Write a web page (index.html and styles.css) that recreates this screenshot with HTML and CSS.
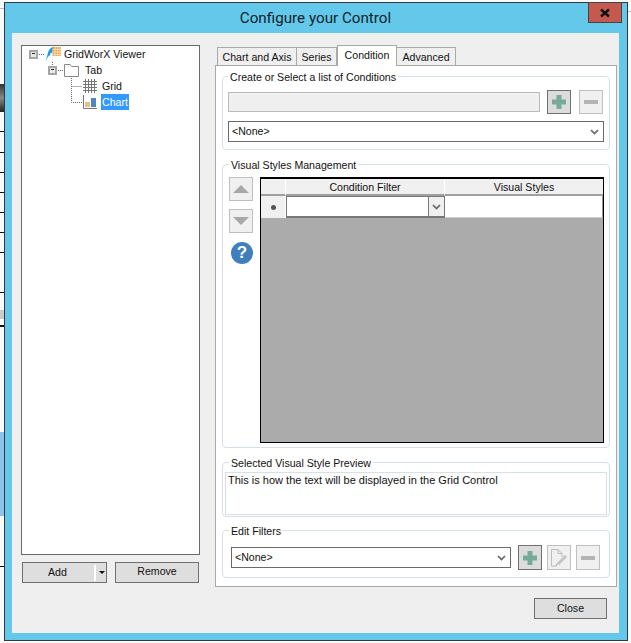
FILE: index.html
```html
<!DOCTYPE html>
<html lang="en">
<head>
<meta charset="utf-8">
<title>Configure your Control</title>
<link rel="stylesheet" href="styles.css">
</head>
<body>
<div class="desktop">
  <i class="bg b1"></i><i class="bg b2"></i><i class="bg b3"></i><i class="bg b4"></i>
  <i class="bg l l1"></i><i class="bg l l2"></i><i class="bg l l3"></i><i class="bg l l4"></i><i class="bg l l5"></i><i class="bg l l6"></i><i class="bg l l7"></i><i class="bg l l8"></i><i class="bg l l9"></i><i class="bg l l10"></i>
  <i class="bg r1"></i>
</div>
<div class="window">
  <div class="titlebar">
    <div class="title">Configure your Control</div>
    <div class="close-x">
      <svg width="12" height="10" viewBox="0 0 12 10"><path d="M2 1.5 L10 8.5 M10 1.5 L2 8.5" stroke="#111" stroke-width="2.4" fill="none"/></svg>
    </div>
  </div>
  <div class="content">
    <div class="main">
      <div class="leftcol">
        <div class="tree">
          <svg class="tree-lines" width="100" height="70" viewBox="0 0 100 70">
            <path d="M17 8.5H23M30.5 16V19M36 24.5H41M49.5 32V56.5H60M49.5 40.5H60" stroke="#666" stroke-dasharray="1 1" fill="none"/>
          </svg>
          <div class="node n0">
            <span class="exp"></span>
            <svg class="ico" width="16" height="16" viewBox="0 0 16 16"><path d="M.5 15.5 L3.5 5 Q5 1.5 9 .5 L7 7 L5 7.5 L5.5 9 L3 10.5 Z" fill="#1e9be8"/><rect x="7.5" y="1" width="8.5" height="9" fill="#e8a24a"/><path d="M10 1V10M12.5 1V10M15 1V10M7.5 3.5H16M7.5 6H16M7.5 8.5H16" stroke="#fbe3c4" stroke-width=".8"/></svg>
            <span class="lbl">GridWorX Viewer</span>
          </div>
          <div class="node n1">
            <span class="exp"></span>
            <svg class="ico" width="15" height="14" viewBox="0 0 15 14"><path d="M.5 13.5V1.5H6L7.5 3.5H14.5V13.5Z" fill="#fff" stroke="#888"/></svg>
            <span class="lbl">Tab</span>
          </div>
          <div class="node n2">
            <svg class="ico" width="14" height="14" viewBox="0 0 14 14"><path d="M0 2.5H14M0 5.5H14M0 8.5H14M0 11.5H14M2.5 0V14M5.5 0V14M8.5 0V14M11.5 0V14" stroke="#777" fill="none"/></svg>
            <span class="lbl">Grid</span>
          </div>
          <div class="node n2">
            <svg class="ico" width="14" height="14" viewBox="0 0 14 14"><path d="M.5 0V13.5H14" stroke="#777" fill="none"/><rect x="2" y="7" width="5" height="5" fill="#e8bf86"/><rect x="8" y="3" width="5" height="9" fill="#4f86bd"/></svg>
            <span class="lbl sel">Chart</span>
          </div>
        </div>
        <div class="tree-btns">
          <div class="btn add"><span class="add-lbl">Add</span><span class="add-sep"></span><span class="add-arrow"></span></div>
          <div class="btn remove">Remove</div>
        </div>
      </div>
      <div class="rightcol">
        <div class="tabs">
          <div class="tab t1">Chart and Axis</div>
          <div class="tab t2">Series</div>
          <div class="tab active t3">Condition</div>
          <div class="tab t4">Advanced</div>
        </div>
        <div class="panel">
          <fieldset class="group g1">
            <legend>Create or Select a list of Conditions</legend>
            <div class="row r-name">
              <div class="input-disabled"></div>
              <div class="icon-btn on"><svg width="16" height="16" viewBox="0 0 16 16"><path d="M8 1V15M1 8H15" stroke="#76ab9b" stroke-width="5"/></svg></div>
              <div class="icon-btn off"><svg width="16" height="16" viewBox="0 0 16 16"><path d="M1 8H15" stroke="#b4b4b4" stroke-width="4"/></svg></div>
            </div>
            <div class="combo full"><span>&lt;None&gt;</span><svg class="chev" width="9" height="6" viewBox="0 0 9 6"><path d="M1 1L4.5 4.5L8 1" stroke="#666" stroke-width="1.7" fill="none"/></svg></div>
          </fieldset>
          <fieldset class="group g2">
            <legend>Visual Styles Management</legend>
            <div class="vs">
              <div class="vs-side">
                <div class="icon-btn off tall"><svg width="16" height="10" viewBox="0 0 16 10"><path d="M8 1L16 9H0Z" fill="#a8a8a8"/></svg></div>
                <div class="icon-btn off tall"><svg width="16" height="10" viewBox="0 0 16 10"><path d="M0 1H16L8 9Z" fill="#a8a8a8"/></svg></div>
                <div class="help">?</div>
              </div>
              <div class="dgrid">
                <div class="dg-head">
                  <div class="dh corner"></div>
                  <div class="dh c1">Condition Filter</div>
                  <div class="dh c2">Visual Styles</div>
                </div>
                <div class="dg-row">
                  <div class="rowhead"><i class="star"></i></div>
                  <div class="dg-combo"><span class="dg-drop"><svg width="9" height="6" viewBox="0 0 9 6"><path d="M1 1L4.5 4.5L8 1" stroke="#666" stroke-width="1.7" fill="none"/></svg></span></div>
                  <div class="dg-cell"></div>
                </div>
              </div>
            </div>
          </fieldset>
          <fieldset class="group g3">
            <legend>Selected Visual Style Preview</legend>
            <div class="preview">This is how the text will be displayed in the Grid Control</div>
          </fieldset>
          <fieldset class="group g4">
            <legend>Edit Filters</legend>
            <div class="row r-edit">
              <div class="combo wide"><span>&lt;None&gt;</span><svg class="chev" width="9" height="6" viewBox="0 0 9 6"><path d="M1 1L4.5 4.5L8 1" stroke="#666" stroke-width="1.7" fill="none"/></svg></div>
              <div class="icon-btn on"><svg width="16" height="16" viewBox="0 0 16 16"><path d="M8 1V15M1 8H15" stroke="#76ab9b" stroke-width="5"/></svg></div>
              <div class="icon-btn off"><svg width="18" height="19" viewBox="0 0 18 19"><path d="M1.5 18V1.5H8L12 5.5V9M8 1.5V5.5H12M1.5 18H6" stroke="#bdbdbd" fill="none"/><path d="M8 16L16 8" stroke="#c4c4c4" stroke-width="3"/><path d="M6 18L7.5 15.5" stroke="#999"/></svg></div>
              <div class="icon-btn off"><svg width="16" height="16" viewBox="0 0 16 16"><path d="M1 8H15" stroke="#b4b4b4" stroke-width="4"/></svg></div>
            </div>
          </fieldset>
        </div>
      </div>
    </div>
    <div class="footer"><div class="btn close-btn">Close</div></div>
  </div>
</div>
</body>
</html>
```
FILE: styles.css
```css
* { box-sizing: border-box; }
html, body { margin: 0; padding: 0; }
body {
  width: 631px; height: 643px; overflow: hidden; position: relative;
  background: #fafafa;
  font-family: "Liberation Sans", Arial, sans-serif;
  font-size: 10.6px; color: #111;
}
.desktop { position: absolute; inset: 0; }
.bg { position: absolute; display: block; left: 0; width: 5px; }
.b1 { top: 8px; height: 1px; background: #bbb; }
.b2 { top: 84px; height: 28px; background: linear-gradient(#333, #888 50%, #222); }
.b3 { top: 310px; height: 9px; background: #ccc; }
.b4 { top: 432px; height: 84px; background: #8fc2ea; }
.l { height: 1px; background: #111; }
.l1 { top: 131px; } .l2 { top: 152px; } .l3 { top: 172px; } .l4 { top: 192px; } .l5 { top: 212px; }
.l6 { top: 232px; } .l7 { top: 252px; } .l8 { top: 292px; } .l9 { top: 325px; height: 2px; } .l10 { top: 566px; }
.r1 { left: 628px; top: 11px; width: 3px; height: 1px; background: #bbb; }

.window {
  position: absolute; left: 4px; top: 2px; width: 624px; height: 639px;
  border: 1px solid #33383c; background: #63c8ea;
  padding: 0 8px 7px 7px;
  display: flex; flex-direction: column;
}
.titlebar { height: 30px; position: relative; flex: none; }
.title {
  text-align: center; font-family: Roboto, sans-serif; font-size: 15.2px;
  line-height: 30px; color: #12222c;
}
.close-x {
  position: absolute; right: -3px; top: -1px; width: 34px; height: 21px;
  background: #c4594f; border: 1px solid #444;
  display: flex; align-items: center; justify-content: center;
}
.content { flex: 1; background: #efefef; display: flex; flex-direction: column; padding: 12px 2px 0 9px; }
.main { display: flex; height: 542px; flex: none; }
.leftcol { width: 179px; flex: none; margin-right: 15px; }
.tree { height: 510px; border: 1px solid #6a6a6a; background: #fff; position: relative; padding: 0 0 0 7px; }
.tree-lines { position: absolute; left: 0; top: 0; }
.node { height: 16px; display: flex; align-items: center; position: relative; }
.n1 { padding-left: 19px; }
.n2 { padding-left: 54px; }
.exp { width: 9px; height: 9px; border: 2px solid #a5a5a5; background: #e8e8e8; position: relative; flex: none; }
.exp::after { content: ""; position: absolute; left: 1px; top: 1.5px; width: 3px; height: 1px; background: #222; }
.n0 .ico { margin-left: 7px; }
.n0 .lbl { margin-left: 3px; }
.n1 .ico { margin-left: 7px; }
.n1 .lbl { margin-left: 6px; }
.n2 .lbl { margin-left: 4px; padding: 0 1px; }
.lbl { white-space: nowrap; line-height: 16px; }
.sel { background: #3399ff; color: #fff; }
.tree-btns { display: flex; justify-content: space-between; margin-top: 7px; padding: 0 1px; }
.btn {
  height: 21px; background: #dedede; border: 1px solid #707070;
  display: flex; align-items: center; justify-content: center; line-height: 18px; padding-bottom: 2px;
}
.add { width: 85px; position: relative; }
.add-lbl { position: absolute; left: 25px; top: 0; }
.add-sep { position: absolute; left: 71px; top: 2px; width: 2px; height: 16px; background: #fff; }
.add-arrow { position: absolute; left: 76px; top: 8px; border: 3px solid transparent; border-top: 3px solid #111; border-bottom: 0; }
.remove { width: 84px; padding-bottom: 3px; }

.rightcol { flex: none; width: 402px; }
.tabs { height: 21px; display: flex; padding-left: 2px; align-items: flex-end; position: relative; z-index: 1; }
.tab {
  height: 18px; border: 1px solid #a9a9a9; border-bottom: 0; background: #efefef; line-height: 18px;
  text-align: center; margin-bottom: 1px; white-space: nowrap;
}
.t1 { width: 80px; } .t2 { width: 40px; border-left: 0; } .t4 { width: 59px; border-left: 0; }
.t3 { width: 60px; height: 21px; background: #fff; margin-bottom: 0; line-height: 19px; }
.panel {
  height: 522px; margin-top: -1px; border: 1px solid #a9a9a9; background: #fff;
  padding: 3px 6px 0;
}
.group {
  margin: 0 0 7px; padding: 0 5px; border: 1px solid #d6e0e6; border-radius: 4px; min-width: 0; display: block;
}
.group legend { margin-left: 0; padding: 0 2px; line-height: 16px; height: 14px; }
.g1 { height: 81px; padding-top: 7px; }
.g2 { height: 291px; padding: 6px 5px 0 6px; }
.g3 { height: 62px; padding: 3px 2px 0; }
.g3 legend { margin-left: 4px; }
.g4 { height: 55px; margin: -1px 0 0; padding: 8px 10px 0 8px; }
.g4 legend { margin-left: -2px; }
.row { display: flex; align-items: center; }
.r-name { gap: 8px; margin-bottom: 7px; }
.input-disabled { width: 312px; height: 20px; background: #efefef; border: 1px solid #bbb; margin-right: -1px; }
.icon-btn { width: 24px; height: 24px; display: flex; align-items: center; justify-content: center; flex: none; }
.icon-btn.on { background: #dcdcdc; border: 1px solid #707070; }
.icon-btn.off { background: #f0f0f0; border: 1px solid #bfbfbf; }
.combo {
  height: 21px; border: 1px solid #6a6a6a; background: #fff; display: flex; align-items: center;
  justify-content: space-between; padding: 0 4px 0 3px; line-height: 19px; flex: none;
}
.full { width: 376px; }
.wide { width: 280px; }
.r-edit { gap: 5px; }
.r-edit .combo { margin-right: 2px; }
.r-edit .icon-btn { height: 25px; }
.vs { display: flex; }
.vs-side { width: 31px; flex: none; display: flex; flex-direction: column; gap: 8px; }
.tall { height: 24px; }
.help {
  width: 22px; height: 22px; border-radius: 50%; background: #3f7fbd; color: #fff; margin: 1px 0 0 2px;
  font-weight: bold; font-size: 17px; line-height: 22px; text-align: center;
}
.dgrid { width: 344px; height: 266px; border: 1px solid #000; border-top-width: 2px; background: #ababab; }
.dg-head { display: flex; height: 17px; background: #fff; }
.dh { background: #f0f0f0; border-right: 1px solid #fff; border-bottom: 2px solid #a0a0a0; text-align: center; line-height: 16px; }
.corner { width: 25px; }
.c1 { width: 159px; }
.c2 { flex: 1; border-right: 0; }
.dg-row { display: flex; height: 22px; background: #fff; }
.rowhead { width: 25px; background: #f0f0f0; border-right: 1px solid #fff; display: flex; align-items: center; justify-content: center; }
.star { width: 5px; height: 5px; background: #555; border-radius: 50%; display: block; }
.dg-combo { width: 159px; border: 1px solid #777; border-width: 1px 1px 2px 1px; position: relative; background: #fff; display: flex; justify-content: flex-end; }
.dg-drop { width: 16px; border-left: 1px solid #777; background: #f0f0f0; display: flex; align-items: center; justify-content: center; }
.dg-cell { flex: 1; border-right: 1px solid #999; border-bottom: 1px solid #ccc; }
.preview { height: 43px; border: 1px solid #d6e0e6; padding: 0 2px; line-height: 14px; font-size: 11px; }
.footer { display: flex; justify-content: flex-end; padding: 11px 10px 0 0; }
.close-btn { width: 73px; }
```
